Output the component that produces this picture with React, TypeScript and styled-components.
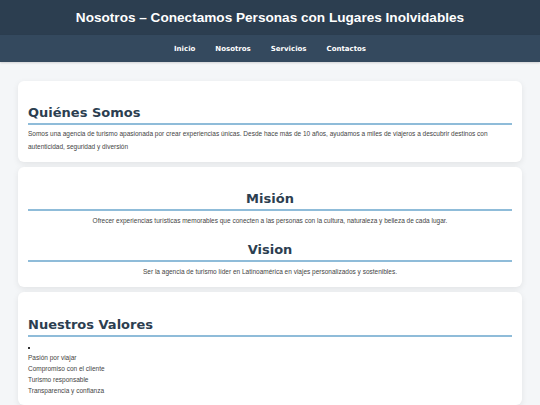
import React from 'react';
import styled, { createGlobalStyle } from 'styled-components';

const GlobalStyle = createGlobalStyle`
  html, body {
    margin: 0;
    padding: 0;
    background: #f4f6f8;
    font-family: 'Liberation Sans', Arial, sans-serif;
  }
`;

const Header = styled.header`
  background: #2c3e50;
  color: #ffffff;
  text-align: center;
  height: 35px;
  display: flex;
  align-items: center;
  justify-content: center;
`;

const SiteTitle = styled.h1`
  margin: 0;
  font-size: 13.6px;
  font-weight: 700;
  font-family: 'Liberation Sans', Arial, sans-serif;
`;

const Nav = styled.nav`
  background: #34495e;
  height: 27px;
  display: flex;
  align-items: center;
  justify-content: center;
  gap: 20px;
  box-shadow: 0 1px 2px rgba(0, 0, 0, 0.15);
`;

const NavLink = styled.a`
  color: #ffffff;
  text-decoration: none;
  font-family: 'DejaVu Sans', Verdana, sans-serif;
  font-weight: 700;
  font-size: 7px;
`;

const Main = styled.main`
  padding: 19px 18px 0;
  display: flex;
  flex-direction: column;
  gap: 5px;
`;

const Card = styled.section<{ $center?: boolean }>`
  background: #ffffff;
  border-radius: 6px;
  padding: 10px 10px 9px;
  box-shadow: 0 2px 6px rgba(0, 0, 0, 0.08);
  text-align: ${({ $center }) => ($center ? 'center' : 'left')};
`;

const Heading = styled.h2`
  margin: 14px 0 0;
  font-family: 'DejaVu Sans', Verdana, sans-serif;
  font-weight: 700;
  font-size: 13px;
  line-height: 16px;
  color: #2c3e50;
  border-bottom: 2px solid #8fbcd9;
  padding-bottom: 2px;
`;

const SubHeading = styled(Heading)`
  margin-top: 15px;
`;

const ValuesHeading = styled(Heading)`
  margin-top: 15px;
`;

const Text = styled.p`
  margin: 2px 0 0;
  font-size: 6.5px;
  line-height: 13px;
  color: #444444;
`;

const CenterText = styled(Text)`
  margin-top: 3px;
`;

const List = styled.ul`
  margin: 5px 0 0;
  padding: 0;
  list-style: none;
  font-size: 6.5px;
  line-height: 11px;
  color: #444444;
`;

const Dot = styled.li`
  height: 10px;
  &::before {
    content: '';
    display: inline-block;
    width: 2px;
    height: 2px;
    background: #333;
    vertical-align: middle;
  }
`;

const Item = styled.li``;

const values = ['Pasión por viajar', 'Compromiso con el cliente', 'Turismo responsable', 'Transparencia y confianza'];

export default function App() {
  return (
    <>
      <GlobalStyle />
      <Header>
        <SiteTitle>Nosotros – Conectamos Personas con Lugares Inolvidables</SiteTitle>
      </Header>
      <Nav>
        <NavLink href="#">Inicio</NavLink>
        <NavLink href="#">Nosotros</NavLink>
        <NavLink href="#">Servicios</NavLink>
        <NavLink href="#">Contactos</NavLink>
      </Nav>
      <Main>
        <Card>
          <Heading>Quiénes Somos</Heading>
          <Text>
            Somos una agencia de turismo apasionada por crear experiencias únicas. Desde hace más de 10 años, ayudamos a miles de viajeros a descubrir destinos con autenticidad, seguridad y diversión
          </Text>
        </Card>
        <Card $center>
          <Heading>Misión</Heading>
          <CenterText>Ofrecer experiencias turísticas memorables que conecten a las personas con la cultura, naturaleza y belleza de cada lugar.</CenterText>
          <SubHeading>Vision</SubHeading>
          <CenterText>Ser la agencia de turismo líder en Latinoamérica en viajes personalizados y sostenibles.</CenterText>
        </Card>
        <Card>
          <ValuesHeading>Nuestros Valores</ValuesHeading>
          <List>
            <Dot />
            {values.map((v) => (
              <Item key={v}>{v}</Item>
            ))}
          </List>
        </Card>
      </Main>
    </>
  );
}
